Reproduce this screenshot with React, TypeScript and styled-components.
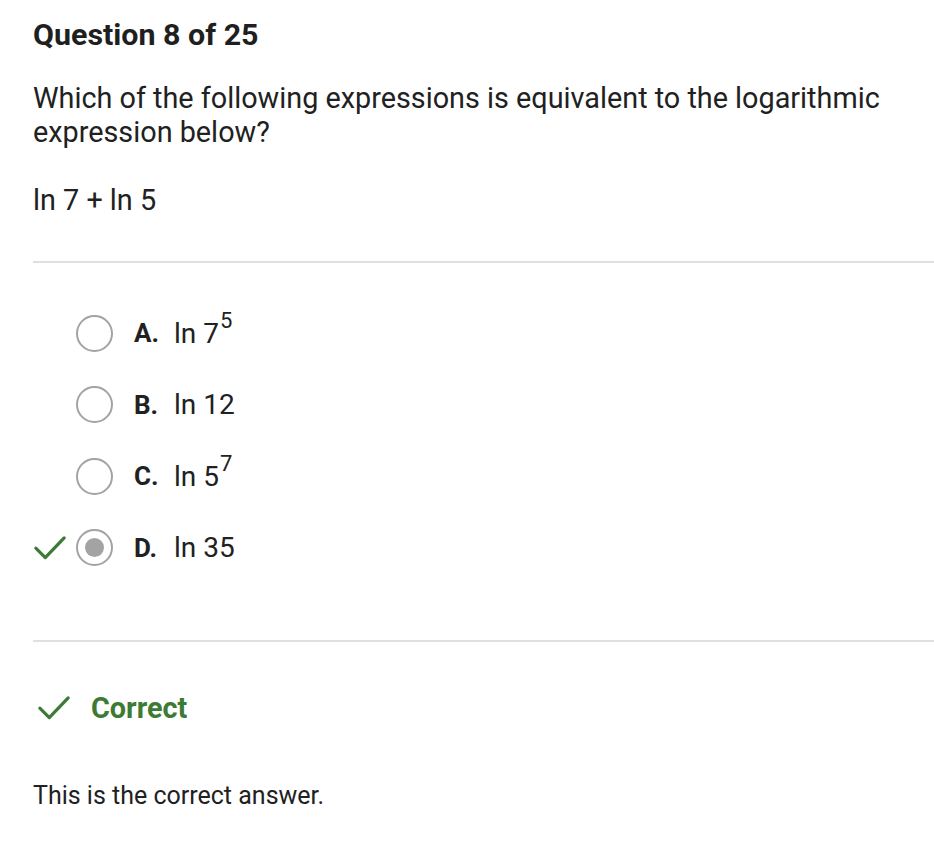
import React from "react";
import styled, { createGlobalStyle } from "styled-components";

const Global = createGlobalStyle`
  body {
    margin: 0;
    background: #fff;
    font-family: Roboto, "Liberation Sans", sans-serif;
    color: #212121;
  }
`;

const Page = styled.div`
  padding: 17px 0 0 33px;
  width: 901px;
`;

const Title = styled.h1`
  margin: 0;
  font-size: 30.4px;
  font-weight: 700;
  line-height: 36px;
  color: #1f1f1f;
`;

const Prompt = styled.p`
  margin: 28px 0 0;
  font-size: 28.8px;
  line-height: 34px;
  padding-right: 10px;
`;

const Expr = styled.p`
  margin: 34px 0 0;
  font-size: 28.8px;
  line-height: 34px;
`;

const Divider = styled.hr<{ $top?: number }>`
  margin: ${(p) => p.$top ?? 0}px 0 0;
  border: none;
  height: 2px;
  background: #e0e0e0;
`;

const Options = styled.div`
  display: flex;
  flex-direction: column;
  gap: 35.5px;
  padding: 52px 0 74px;
`;

const Option = styled.div`
  display: flex;
  align-items: center;
  height: 36px;
`;

const Mark = styled.div`
  width: 43px;
  display: flex;
  align-items: center;
`;

const Radio = styled.div<{ $checked?: boolean }>`
  width: 33px;
  height: 33px;
  border-radius: 50%;
  border: 2px solid #a3a3a3;
  display: flex;
  align-items: center;
  justify-content: center;
  &::after {
    content: "";
    display: ${(p) => (p.$checked ? "block" : "none")};
    width: 19px;
    height: 19px;
    border-radius: 50%;
    background: #a3a3a3;
  }
`;

const Letter = styled.span`
  margin-left: 21px;
  font-size: 26px;
  font-weight: 700;
  width: 40px;
`;

const Answer = styled.span`
  font-size: 28px;
  sup {
    font-size: 22px;
    line-height: 0;
    position: relative;
    top: -4px;
    margin-left: 1px;
  }
`;

const Result = styled.div`
  display: flex;
  align-items: center;
  padding-top: 49px;
  color: #3d7a35;
  font-size: 28.8px;
  font-weight: 700;
`;

const ResultIcon = styled.div`
  width: 54px;
  display: flex;
  padding-left: 4px;
`;

const Note = styled.p`
  margin: 55px 0 0;
  font-size: 25px;
  line-height: 32px;
`;

const Check = ({ size = 36 }: { size?: number }) => (
  <svg width={size} height={size * 0.75} viewBox="0 0 36 27" fill="none">
    <path d="M3 14 L13 24 L33 3" stroke="#3d7a35" strokeWidth="3.4" strokeLinecap="round" strokeLinejoin="round" />
  </svg>
);

const options = [
  { key: "A.", text: <>ln 7<sup>5</sup></> },
  { key: "B.", text: <>ln 12</> },
  { key: "C.", text: <>ln 5<sup>7</sup></> },
  { key: "D.", text: <>ln 35</>, chosen: true },
];

export default function App() {
  return (
    <Page>
      <Global />
      <Title>Question 8 of 25</Title>
      <Prompt>Which of the following expressions is equivalent to the logarithmic expression below?</Prompt>
      <Expr>ln 7 + ln 5</Expr>
      <Divider $top={44} />
      <Options>
        {options.map((o) => (
          <Option key={o.key}>
            <Mark>{o.chosen && <Check size={34} />}</Mark>
            <Radio $checked={o.chosen} />
            <Letter>{o.key}</Letter>
            <Answer>{o.text}</Answer>
          </Option>
        ))}
      </Options>
      <Divider />
      <Result>
        <ResultIcon>
          <Check size={34} />
        </ResultIcon>
        Correct
      </Result>
      <Note>This is the correct answer.</Note>
    </Page>
  );
}
